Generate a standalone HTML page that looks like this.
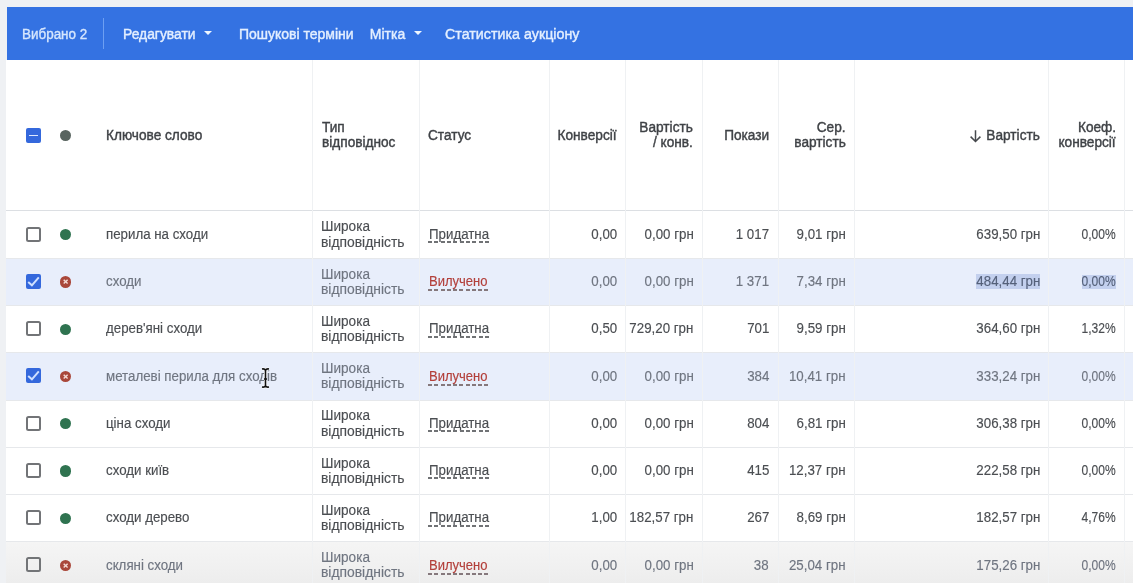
<!DOCTYPE html>
<html><head><meta charset="utf-8"><style>
html,body{margin:0;padding:0;}
body{width:1133px;height:583px;overflow:hidden;position:relative;background:#eff1f4;font-family:"Liberation Sans",sans-serif;filter:blur(0.35px);}
.t{position:absolute;white-space:nowrap;line-height:1;-webkit-text-stroke:0.15px currentColor;}
.b{position:absolute;}
</style></head><body>
<div class="b" style="left:6px;top:60px;width:1127px;height:523px;background:#fff"></div>
<div class="b" style="left:7px;top:7px;width:1126px;height:53px;background:#3472e2"></div>
<div class="b" style="left:6px;top:258px;width:1127px;height:47px;background:#e8eefb"></div>
<div class="b" style="left:6px;top:352px;width:1127px;height:48px;background:#e8eefb"></div>
<div class="b" style="left:6px;top:541px;width:1127px;height:42px;background:linear-gradient(#f5f5f5,#ededed)"></div>
<div class="b" style="left:6px;top:258px;width:1127px;height:1px;background:#e6e8eb"></div>
<div class="b" style="left:6px;top:305px;width:1127px;height:1px;background:#e6e8eb"></div>
<div class="b" style="left:6px;top:352px;width:1127px;height:1px;background:#e6e8eb"></div>
<div class="b" style="left:6px;top:400px;width:1127px;height:1px;background:#e6e8eb"></div>
<div class="b" style="left:6px;top:447px;width:1127px;height:1px;background:#e6e8eb"></div>
<div class="b" style="left:6px;top:494px;width:1127px;height:1px;background:#e6e8eb"></div>
<div class="b" style="left:6px;top:541px;width:1127px;height:1px;background:#e6e8eb"></div>
<div class="b" style="left:6px;top:209.5px;width:1127px;height:1.2px;background:#dcdfe3"></div>
<div class="b" style="left:312px;top:60px;width:1px;height:523px;background:#eff1f3"></div>
<div class="b" style="left:419px;top:60px;width:1px;height:523px;background:#eff1f3"></div>
<div class="b" style="left:549px;top:60px;width:1px;height:523px;background:#eff1f3"></div>
<div class="b" style="left:624.6px;top:60px;width:1px;height:523px;background:#eff1f3"></div>
<div class="b" style="left:701.5px;top:60px;width:1px;height:523px;background:#eff1f3"></div>
<div class="b" style="left:777.6px;top:60px;width:1px;height:523px;background:#eff1f3"></div>
<div class="b" style="left:853.5px;top:60px;width:1px;height:523px;background:#eff1f3"></div>
<div class="b" style="left:1048px;top:60px;width:1px;height:523px;background:#eff1f3"></div>
<div class="b" style="left:1124px;top:60px;width:1px;height:523px;background:#eff1f3"></div>
<div class="t" style="left:22.30px;top:26.55px;font-size:14px;color:#d6e6fd;transform:scaleX(0.96);transform-origin:0 0;-webkit-text-stroke:0.35px #d6e6fd;">Вибрано 2</div>
<div class="b" style="left:102.8px;top:18px;width:1.4px;height:31px;background:#6d9ff2"></div>
<div class="t" style="left:123.30px;top:26.65px;font-size:14px;color:#e4efff;transform:scaleX(0.99);transform-origin:0 0;-webkit-text-stroke:0.4px #e4efff;">Редагувати</div>
<div class="b" style="left:203.8px;top:30.5px;width:0;height:0;border-left:4.4px solid transparent;border-right:4.4px solid transparent;border-top:4.8px solid #eef6ff"></div>
<div class="t" style="left:238.90px;top:26.65px;font-size:14px;color:#e4efff;transform-origin:0 0;-webkit-text-stroke:0.4px #e4efff;">Пошукові терміни</div>
<div class="t" style="left:369.80px;top:26.65px;font-size:14px;color:#e4efff;transform-origin:0 0;-webkit-text-stroke:0.4px #e4efff;">Мітка</div>
<div class="b" style="left:414.1px;top:30.5px;width:0;height:0;border-left:4.4px solid transparent;border-right:4.4px solid transparent;border-top:4.8px solid #eef6ff"></div>
<div class="t" style="left:444.50px;top:26.65px;font-size:14px;color:#e4efff;transform:scaleX(1.02);transform-origin:0 0;-webkit-text-stroke:0.4px #e4efff;">Статистика аукціону</div>
<div class="b" style="left:26px;top:128px;width:15px;height:15px;background:#3468dc;border-radius:2px"></div>
<div class="b" style="left:29px;top:134.5px;width:8.8px;height:1.7px;background:#dde8ff"></div>
<div class="b" style="left:60px;top:129.8px;width:11.3px;height:11.3px;background:#58645f;border-radius:50%"></div>
<div class="t" style="left:106.00px;top:128.15px;font-size:14px;color:#3f4246;transform:scaleX(0.975);transform-origin:0 0;-webkit-text-stroke:0.4px #3f4246;">Ключове слово</div>
<div class="t" style="left:322.00px;top:120.15px;font-size:14px;color:#3f4246;transform:scaleX(0.975);transform-origin:0 0;-webkit-text-stroke:0.4px #3f4246;">Тип</div>
<div class="t" style="left:322.00px;top:135.45px;font-size:14px;color:#3f4246;transform:scaleX(0.975);transform-origin:0 0;-webkit-text-stroke:0.4px #3f4246;">відповіднос</div>
<div class="t" style="left:428.00px;top:128.15px;font-size:14px;color:#3f4246;transform:scaleX(0.975);transform-origin:0 0;-webkit-text-stroke:0.4px #3f4246;">Статус</div>
<div class="t" style="right:516.00px;top:128.15px;font-size:14px;color:#3f4246;transform:scaleX(0.975);transform-origin:100% 0;-webkit-text-stroke:0.4px #3f4246;">Конверсії</div>
<div class="t" style="right:440.00px;top:120.15px;font-size:14px;color:#3f4246;transform:scaleX(0.975);transform-origin:100% 0;-webkit-text-stroke:0.4px #3f4246;">Вартість</div>
<div class="t" style="right:440.00px;top:135.45px;font-size:14px;color:#3f4246;transform:scaleX(0.975);transform-origin:100% 0;-webkit-text-stroke:0.4px #3f4246;">/ конв.</div>
<div class="t" style="right:363.40px;top:128.15px;font-size:14px;color:#3f4246;transform:scaleX(0.975);transform-origin:100% 0;-webkit-text-stroke:0.4px #3f4246;">Покази</div>
<div class="t" style="right:287.40px;top:120.15px;font-size:14px;color:#3f4246;transform:scaleX(0.975);transform-origin:100% 0;-webkit-text-stroke:0.4px #3f4246;">Сер.</div>
<div class="t" style="right:287.40px;top:135.45px;font-size:14px;color:#3f4246;transform:scaleX(0.975);transform-origin:100% 0;-webkit-text-stroke:0.4px #3f4246;">вартість</div>
<div class="t" style="right:93.60px;top:128.15px;font-size:14px;color:#3f4246;transform:scaleX(0.975);transform-origin:100% 0;-webkit-text-stroke:0.4px #3f4246;">Вартість</div>
<svg class="b" style="left:968px;top:128px" width="16" height="16" viewBox="0 0 16 16"><path d="M7.5 2.2 L7.5 13.5 M2.6 8.6 L7.5 13.5 L12.4 8.6" fill="none" stroke="#46494d" stroke-width="1.5"/></svg>
<div class="t" style="right:17.00px;top:120.15px;font-size:14px;color:#3f4246;transform:scaleX(0.975);transform-origin:100% 0;-webkit-text-stroke:0.4px #3f4246;">Коеф.</div>
<div class="t" style="right:17.00px;top:135.45px;font-size:14px;color:#3f4246;transform:scaleX(0.975);transform-origin:100% 0;-webkit-text-stroke:0.4px #3f4246;">конверсії</div>
<div class="b" style="left:976px;top:274.3px;width:64px;height:14.8px;background:#c3d0ee"></div>
<div class="b" style="left:1081.5px;top:274.5px;width:34.5px;height:14.8px;background:#c3d0ee"></div>
<div class="b" style="left:26px;top:226.60px;width:11px;height:11px;border:2px solid #727477;border-radius:2.5px"></div>
<div class="b" style="left:60px;top:229.00px;width:11.3px;height:11.3px;background:#2f7350;border-radius:50%"></div>
<div class="t" style="left:106.00px;top:226.95px;font-size:14px;color:#4b4e52;transform:scaleX(0.95);transform-origin:0 0;">перила на сходи</div>
<div class="t" style="left:321.20px;top:219.35px;font-size:14px;color:#4b4e52;transform:scaleX(0.97);transform-origin:0 0;">Широка</div>
<div class="t" style="left:321.20px;top:234.55px;font-size:14px;color:#4b4e52;transform:scaleX(0.99);transform-origin:0 0;">відповідність</div>
<div class="t" style="left:428.50px;top:226.95px;font-size:14px;color:#4b4e52;transform:scaleX(0.95);transform-origin:0 0;">Придатна</div>
<div class="b" style="left:427.7px;top:241px;width:61.5px;height:2px;background:repeating-linear-gradient(90deg,#707275 0 4px,transparent 4px 6.35px)"></div>
<div class="t" style="right:516.00px;top:226.95px;font-size:14px;color:#4b4e52;transform:scaleX(0.95);transform-origin:100% 0;">0,00</div>
<div class="t" style="right:439.70px;top:226.95px;font-size:14px;color:#4b4e52;transform:scaleX(0.95);transform-origin:100% 0;">0,00 грн</div>
<div class="t" style="right:364.00px;top:226.95px;font-size:14px;color:#4b4e52;transform:scaleX(0.95);transform-origin:100% 0;">1 017</div>
<div class="t" style="right:287.00px;top:226.95px;font-size:14px;color:#4b4e52;transform:scaleX(0.95);transform-origin:100% 0;">9,01 грн</div>
<div class="t" style="right:93.00px;top:226.95px;font-size:14px;color:#4b4e52;transform:scaleX(0.95);transform-origin:100% 0;">639,50 грн</div>
<div class="t" style="right:17.00px;top:226.95px;font-size:14px;color:#4b4e52;transform:scaleX(0.86);transform-origin:100% 0;">0,00%</div>
<div class="b" style="left:26px;top:273.85px;width:15px;height:15px;background:#3468dc;border-radius:2px"><svg width="15" height="15" viewBox="0 0 15 15" style="position:absolute;left:0;top:0"><path d="M2.2 8.0 L5.9 11.3 L12.8 3.4" fill="none" stroke="#cfe0ff" stroke-width="2"/></svg></div>
<div class="b" style="left:60px;top:276.25px;width:11.3px;height:11.3px;background:#a9473a;border-radius:50%"><svg width="11.3" height="11.3" viewBox="0 0 11 11" style="position:absolute;left:0;top:0"><path d="M3.6 3.6 L7.4 7.4 M7.4 3.6 L3.6 7.4" stroke="#f3d9d4" stroke-width="1.4"/></svg></div>
<div class="t" style="left:106.00px;top:274.20px;font-size:14px;color:#6f7580;transform:scaleX(0.95);transform-origin:0 0;">сходи</div>
<div class="t" style="left:321.20px;top:266.60px;font-size:14px;color:#6f7580;transform:scaleX(0.97);transform-origin:0 0;">Широка</div>
<div class="t" style="left:321.20px;top:281.80px;font-size:14px;color:#6f7580;transform:scaleX(0.99);transform-origin:0 0;">відповідність</div>
<div class="t" style="left:428.50px;top:274.20px;font-size:14px;color:#b23f3a;transform:scaleX(0.93);transform-origin:0 0;">Вилучено</div>
<div class="b" style="left:427.7px;top:289px;width:60px;height:2px;background:repeating-linear-gradient(90deg,#85787c 0 4px,transparent 4px 6.25px)"></div>
<div class="t" style="right:516.00px;top:274.20px;font-size:14px;color:#6f7580;transform:scaleX(0.95);transform-origin:100% 0;">0,00</div>
<div class="t" style="right:439.70px;top:274.20px;font-size:14px;color:#6f7580;transform:scaleX(0.95);transform-origin:100% 0;">0,00 грн</div>
<div class="t" style="right:364.00px;top:274.20px;font-size:14px;color:#6f7580;transform:scaleX(0.95);transform-origin:100% 0;">1 371</div>
<div class="t" style="right:287.00px;top:274.20px;font-size:14px;color:#6f7580;transform:scaleX(0.95);transform-origin:100% 0;">7,34 грн</div>
<div class="t" style="right:93.00px;top:274.20px;font-size:14px;color:#55617a;transform:scaleX(0.95);transform-origin:100% 0;">484,44 грн</div>
<div class="t" style="right:17.00px;top:274.20px;font-size:14px;color:#55617a;transform:scaleX(0.86);transform-origin:100% 0;">0,00%</div>
<div class="b" style="left:26px;top:321.10px;width:11px;height:11px;border:2px solid #727477;border-radius:2.5px"></div>
<div class="b" style="left:60px;top:323.50px;width:11.3px;height:11.3px;background:#2f7350;border-radius:50%"></div>
<div class="t" style="left:106.00px;top:321.45px;font-size:14px;color:#4b4e52;transform:scaleX(0.95);transform-origin:0 0;">дерев'яні сходи</div>
<div class="t" style="left:321.20px;top:313.85px;font-size:14px;color:#4b4e52;transform:scaleX(0.97);transform-origin:0 0;">Широка</div>
<div class="t" style="left:321.20px;top:329.05px;font-size:14px;color:#4b4e52;transform:scaleX(0.99);transform-origin:0 0;">відповідність</div>
<div class="t" style="left:428.50px;top:321.45px;font-size:14px;color:#4b4e52;transform:scaleX(0.95);transform-origin:0 0;">Придатна</div>
<div class="b" style="left:427.7px;top:336px;width:61.5px;height:2px;background:repeating-linear-gradient(90deg,#707275 0 4px,transparent 4px 6.35px)"></div>
<div class="t" style="right:516.00px;top:321.45px;font-size:14px;color:#4b4e52;transform:scaleX(0.95);transform-origin:100% 0;">0,50</div>
<div class="t" style="right:439.70px;top:321.45px;font-size:14px;color:#4b4e52;transform:scaleX(0.95);transform-origin:100% 0;">729,20 грн</div>
<div class="t" style="right:364.00px;top:321.45px;font-size:14px;color:#4b4e52;transform:scaleX(0.95);transform-origin:100% 0;">701</div>
<div class="t" style="right:287.00px;top:321.45px;font-size:14px;color:#4b4e52;transform:scaleX(0.95);transform-origin:100% 0;">9,59 грн</div>
<div class="t" style="right:93.00px;top:321.45px;font-size:14px;color:#4b4e52;transform:scaleX(0.95);transform-origin:100% 0;">364,60 грн</div>
<div class="t" style="right:17.00px;top:321.45px;font-size:14px;color:#4b4e52;transform:scaleX(0.86);transform-origin:100% 0;">1,32%</div>
<div class="b" style="left:26px;top:368.35px;width:15px;height:15px;background:#3468dc;border-radius:2px"><svg width="15" height="15" viewBox="0 0 15 15" style="position:absolute;left:0;top:0"><path d="M2.2 8.0 L5.9 11.3 L12.8 3.4" fill="none" stroke="#cfe0ff" stroke-width="2"/></svg></div>
<div class="b" style="left:60px;top:370.75px;width:11.3px;height:11.3px;background:#a9473a;border-radius:50%"><svg width="11.3" height="11.3" viewBox="0 0 11 11" style="position:absolute;left:0;top:0"><path d="M3.6 3.6 L7.4 7.4 M7.4 3.6 L3.6 7.4" stroke="#f3d9d4" stroke-width="1.4"/></svg></div>
<div class="t" style="left:106.00px;top:368.70px;font-size:14px;color:#6f7580;transform:scaleX(0.95);transform-origin:0 0;">металеві перила для сходів</div>
<div class="t" style="left:321.20px;top:361.10px;font-size:14px;color:#6f7580;transform:scaleX(0.97);transform-origin:0 0;">Широка</div>
<div class="t" style="left:321.20px;top:376.30px;font-size:14px;color:#6f7580;transform:scaleX(0.99);transform-origin:0 0;">відповідність</div>
<div class="t" style="left:428.50px;top:368.70px;font-size:14px;color:#b23f3a;transform:scaleX(0.93);transform-origin:0 0;">Вилучено</div>
<div class="b" style="left:427.7px;top:384px;width:60px;height:2px;background:repeating-linear-gradient(90deg,#85787c 0 4px,transparent 4px 6.25px)"></div>
<div class="t" style="right:516.00px;top:368.70px;font-size:14px;color:#6f7580;transform:scaleX(0.95);transform-origin:100% 0;">0,00</div>
<div class="t" style="right:439.70px;top:368.70px;font-size:14px;color:#6f7580;transform:scaleX(0.95);transform-origin:100% 0;">0,00 грн</div>
<div class="t" style="right:364.00px;top:368.70px;font-size:14px;color:#6f7580;transform:scaleX(0.95);transform-origin:100% 0;">384</div>
<div class="t" style="right:287.00px;top:368.70px;font-size:14px;color:#6f7580;transform:scaleX(0.95);transform-origin:100% 0;">10,41 грн</div>
<div class="t" style="right:93.00px;top:368.70px;font-size:14px;color:#6f7580;transform:scaleX(0.95);transform-origin:100% 0;">333,24 грн</div>
<div class="t" style="right:17.00px;top:368.70px;font-size:14px;color:#6f7580;transform:scaleX(0.86);transform-origin:100% 0;">0,00%</div>
<div class="b" style="left:26px;top:415.60px;width:11px;height:11px;border:2px solid #727477;border-radius:2.5px"></div>
<div class="b" style="left:60px;top:418.00px;width:11.3px;height:11.3px;background:#2f7350;border-radius:50%"></div>
<div class="t" style="left:106.00px;top:415.95px;font-size:14px;color:#4b4e52;transform:scaleX(0.95);transform-origin:0 0;">ціна сходи</div>
<div class="t" style="left:321.20px;top:408.35px;font-size:14px;color:#4b4e52;transform:scaleX(0.97);transform-origin:0 0;">Широка</div>
<div class="t" style="left:321.20px;top:423.55px;font-size:14px;color:#4b4e52;transform:scaleX(0.99);transform-origin:0 0;">відповідність</div>
<div class="t" style="left:428.50px;top:415.95px;font-size:14px;color:#4b4e52;transform:scaleX(0.95);transform-origin:0 0;">Придатна</div>
<div class="b" style="left:427.7px;top:430px;width:61.5px;height:2px;background:repeating-linear-gradient(90deg,#707275 0 4px,transparent 4px 6.35px)"></div>
<div class="t" style="right:516.00px;top:415.95px;font-size:14px;color:#4b4e52;transform:scaleX(0.95);transform-origin:100% 0;">0,00</div>
<div class="t" style="right:439.70px;top:415.95px;font-size:14px;color:#4b4e52;transform:scaleX(0.95);transform-origin:100% 0;">0,00 грн</div>
<div class="t" style="right:364.00px;top:415.95px;font-size:14px;color:#4b4e52;transform:scaleX(0.95);transform-origin:100% 0;">804</div>
<div class="t" style="right:287.00px;top:415.95px;font-size:14px;color:#4b4e52;transform:scaleX(0.95);transform-origin:100% 0;">6,81 грн</div>
<div class="t" style="right:93.00px;top:415.95px;font-size:14px;color:#4b4e52;transform:scaleX(0.95);transform-origin:100% 0;">306,38 грн</div>
<div class="t" style="right:17.00px;top:415.95px;font-size:14px;color:#4b4e52;transform:scaleX(0.86);transform-origin:100% 0;">0,00%</div>
<div class="b" style="left:26px;top:462.85px;width:11px;height:11px;border:2px solid #727477;border-radius:2.5px"></div>
<div class="b" style="left:60px;top:465.25px;width:11.3px;height:11.3px;background:#2f7350;border-radius:50%"></div>
<div class="t" style="left:106.00px;top:463.20px;font-size:14px;color:#4b4e52;transform:scaleX(0.95);transform-origin:0 0;">сходи київ</div>
<div class="t" style="left:321.20px;top:455.60px;font-size:14px;color:#4b4e52;transform:scaleX(0.97);transform-origin:0 0;">Широка</div>
<div class="t" style="left:321.20px;top:470.80px;font-size:14px;color:#4b4e52;transform:scaleX(0.99);transform-origin:0 0;">відповідність</div>
<div class="t" style="left:428.50px;top:463.20px;font-size:14px;color:#4b4e52;transform:scaleX(0.95);transform-origin:0 0;">Придатна</div>
<div class="b" style="left:427.7px;top:477px;width:61.5px;height:2px;background:repeating-linear-gradient(90deg,#707275 0 4px,transparent 4px 6.35px)"></div>
<div class="t" style="right:516.00px;top:463.20px;font-size:14px;color:#4b4e52;transform:scaleX(0.95);transform-origin:100% 0;">0,00</div>
<div class="t" style="right:439.70px;top:463.20px;font-size:14px;color:#4b4e52;transform:scaleX(0.95);transform-origin:100% 0;">0,00 грн</div>
<div class="t" style="right:364.00px;top:463.20px;font-size:14px;color:#4b4e52;transform:scaleX(0.95);transform-origin:100% 0;">415</div>
<div class="t" style="right:287.00px;top:463.20px;font-size:14px;color:#4b4e52;transform:scaleX(0.95);transform-origin:100% 0;">12,37 грн</div>
<div class="t" style="right:93.00px;top:463.20px;font-size:14px;color:#4b4e52;transform:scaleX(0.95);transform-origin:100% 0;">222,58 грн</div>
<div class="t" style="right:17.00px;top:463.20px;font-size:14px;color:#4b4e52;transform:scaleX(0.86);transform-origin:100% 0;">0,00%</div>
<div class="b" style="left:26px;top:510.10px;width:11px;height:11px;border:2px solid #727477;border-radius:2.5px"></div>
<div class="b" style="left:60px;top:512.50px;width:11.3px;height:11.3px;background:#2f7350;border-radius:50%"></div>
<div class="t" style="left:106.00px;top:510.45px;font-size:14px;color:#4b4e52;transform:scaleX(0.95);transform-origin:0 0;">сходи дерево</div>
<div class="t" style="left:321.20px;top:502.85px;font-size:14px;color:#4b4e52;transform:scaleX(0.97);transform-origin:0 0;">Широка</div>
<div class="t" style="left:321.20px;top:518.05px;font-size:14px;color:#4b4e52;transform:scaleX(0.99);transform-origin:0 0;">відповідність</div>
<div class="t" style="left:428.50px;top:510.45px;font-size:14px;color:#4b4e52;transform:scaleX(0.95);transform-origin:0 0;">Придатна</div>
<div class="b" style="left:427.7px;top:525px;width:61.5px;height:2px;background:repeating-linear-gradient(90deg,#707275 0 4px,transparent 4px 6.35px)"></div>
<div class="t" style="right:516.00px;top:510.45px;font-size:14px;color:#4b4e52;transform:scaleX(0.95);transform-origin:100% 0;">1,00</div>
<div class="t" style="right:439.70px;top:510.45px;font-size:14px;color:#4b4e52;transform:scaleX(0.95);transform-origin:100% 0;">182,57 грн</div>
<div class="t" style="right:364.00px;top:510.45px;font-size:14px;color:#4b4e52;transform:scaleX(0.95);transform-origin:100% 0;">267</div>
<div class="t" style="right:287.00px;top:510.45px;font-size:14px;color:#4b4e52;transform:scaleX(0.95);transform-origin:100% 0;">8,69 грн</div>
<div class="t" style="right:93.00px;top:510.45px;font-size:14px;color:#4b4e52;transform:scaleX(0.95);transform-origin:100% 0;">182,57 грн</div>
<div class="t" style="right:17.00px;top:510.45px;font-size:14px;color:#4b4e52;transform:scaleX(0.86);transform-origin:100% 0;">4,76%</div>
<div class="b" style="left:26px;top:557.35px;width:11px;height:11px;border:2px solid #727477;border-radius:2.5px"></div>
<div class="b" style="left:60px;top:559.75px;width:11.3px;height:11.3px;background:#a9473a;border-radius:50%"><svg width="11.3" height="11.3" viewBox="0 0 11 11" style="position:absolute;left:0;top:0"><path d="M3.6 3.6 L7.4 7.4 M7.4 3.6 L3.6 7.4" stroke="#f3d9d4" stroke-width="1.4"/></svg></div>
<div class="t" style="left:106.00px;top:557.70px;font-size:14px;color:#6f7580;transform:scaleX(0.95);transform-origin:0 0;">скляні сходи</div>
<div class="t" style="left:321.20px;top:550.10px;font-size:14px;color:#6f7580;transform:scaleX(0.97);transform-origin:0 0;">Широка</div>
<div class="t" style="left:321.20px;top:565.30px;font-size:14px;color:#6f7580;transform:scaleX(0.99);transform-origin:0 0;">відповідність</div>
<div class="t" style="left:428.50px;top:557.70px;font-size:14px;color:#b23f3a;transform:scaleX(0.93);transform-origin:0 0;">Вилучено</div>
<div class="b" style="left:427.7px;top:573px;width:60px;height:2px;background:repeating-linear-gradient(90deg,#85787c 0 4px,transparent 4px 6.25px)"></div>
<div class="t" style="right:516.00px;top:557.70px;font-size:14px;color:#6f7580;transform:scaleX(0.95);transform-origin:100% 0;">0,00</div>
<div class="t" style="right:439.70px;top:557.70px;font-size:14px;color:#6f7580;transform:scaleX(0.95);transform-origin:100% 0;">0,00 грн</div>
<div class="t" style="right:364.00px;top:557.70px;font-size:14px;color:#6f7580;transform:scaleX(0.95);transform-origin:100% 0;">38</div>
<div class="t" style="right:287.00px;top:557.70px;font-size:14px;color:#6f7580;transform:scaleX(0.95);transform-origin:100% 0;">25,04 грн</div>
<div class="t" style="right:93.00px;top:557.70px;font-size:14px;color:#6f7580;transform:scaleX(0.95);transform-origin:100% 0;">175,26 грн</div>
<div class="t" style="right:17.00px;top:557.70px;font-size:14px;color:#6f7580;transform:scaleX(0.86);transform-origin:100% 0;">0,00%</div>
<svg class="b" style="left:258px;top:365px" width="16" height="26" viewBox="0 0 16 26"><path d="M4 4 Q7.5 3.5 7.5 6 L7.5 20 Q7.5 22.5 4 22 M11 4 Q7.5 3.5 7.5 6 M11 22 Q7.5 22.5 7.5 20 M6 14 L9 14" fill="none" stroke="#fff" stroke-width="3"/><path d="M4 4 Q7.5 3.5 7.5 6 L7.5 20 Q7.5 22.5 4 22 M11 4 Q7.5 3.5 7.5 6 M11 22 Q7.5 22.5 7.5 20 M6 14 L9 14" fill="none" stroke="#111" stroke-width="1.6"/></svg>
</body></html>
